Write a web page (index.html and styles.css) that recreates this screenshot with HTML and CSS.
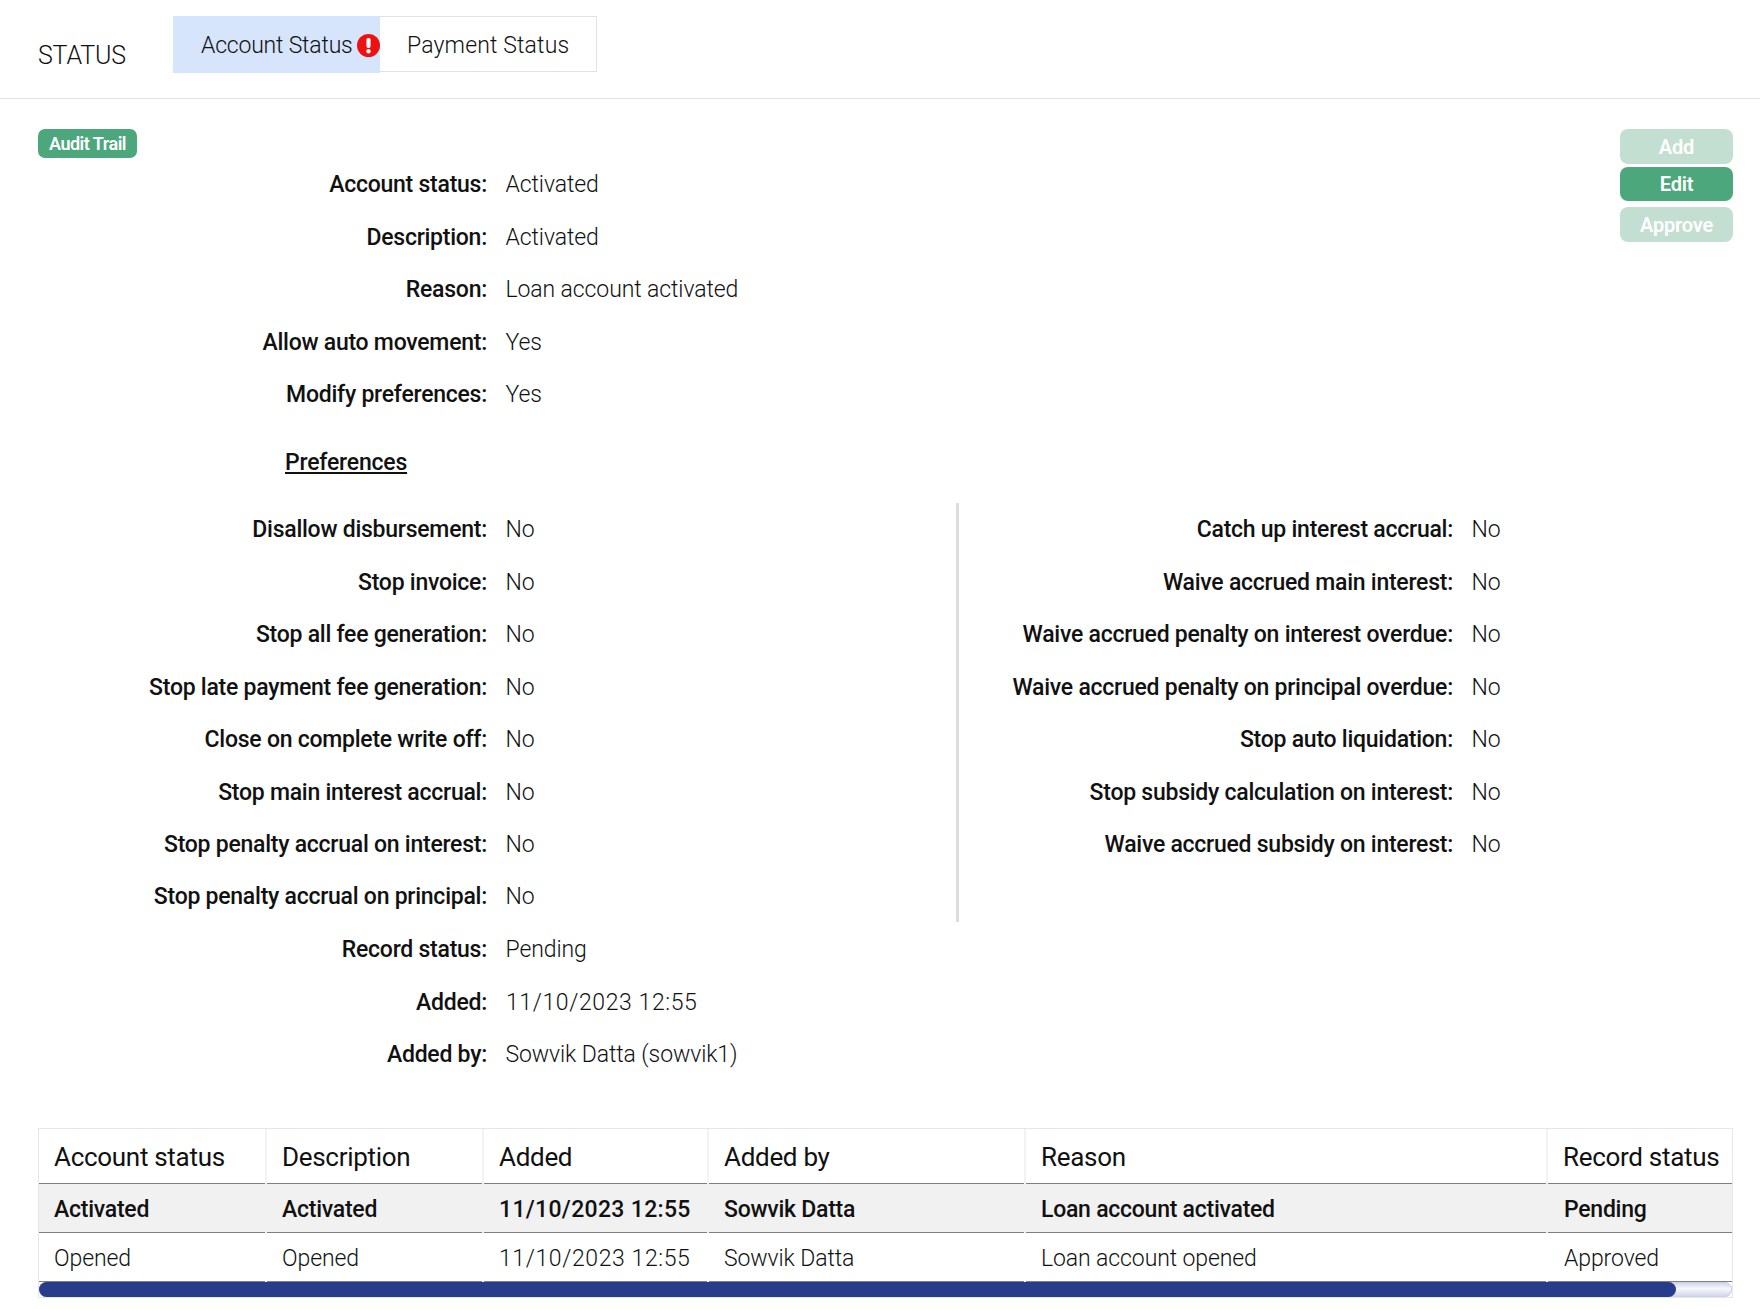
FILE: index.html
```html
<!DOCTYPE html>
<html lang="en">
<head>
<meta charset="utf-8">
<title>Status</title>
<link rel="stylesheet" href="styles.css">
</head>
<body>
<header class="topbar">
  <h1 class="title">STATUS</h1>
  <nav class="tabs">
    <a class="tab tab-active">Account Status<svg class="alert" viewBox="0 0 20 20" width="23" height="23"><circle cx="10" cy="10" r="10" fill="#ee1111"/><rect x="8.2" y="3.5" width="3.6" height="8.6" rx="1.6" fill="#fff"/><circle cx="10" cy="15" r="1.9" fill="#fff"/></svg></a>
    <a class="tab tab-plain">Payment Status</a>
  </nav>
</header>
<main class="content">
  <div class="actions">
    <button class="btn btn-off btn-add">Add</button>
    <button class="btn btn-edit">Edit</button>
    <button class="btn btn-off btn-approve">Approve</button>
  </div>
  <button class="audit">Audit Trail</button>
  <dl class="fields fields-top">
    <dt>Account status:</dt><dd>Activated</dd>
    <dt>Description:</dt><dd>Activated</dd>
    <dt>Reason:</dt><dd>Loan account activated</dd>
    <dt>Allow auto movement:</dt><dd>Yes</dd>
    <dt>Modify preferences:</dt><dd>Yes</dd>
  </dl>
  <h2 class="prefs-title">Preferences</h2>
  <div class="prefs">
    <dl class="fields prefs-left">
      <dt>Disallow disbursement:</dt><dd>No</dd>
      <dt>Stop invoice:</dt><dd>No</dd>
      <dt>Stop all fee generation:</dt><dd>No</dd>
      <dt>Stop late payment fee generation:</dt><dd>No</dd>
      <dt>Close on complete write off:</dt><dd>No</dd>
      <dt>Stop main interest accrual:</dt><dd>No</dd>
      <dt>Stop penalty accrual on interest:</dt><dd>No</dd>
      <dt>Stop penalty accrual on principal:</dt><dd>No</dd>
    </dl>
    <dl class="fields prefs-right">
      <dt>Catch up interest accrual:</dt><dd>No</dd>
      <dt>Waive accrued main interest:</dt><dd>No</dd>
      <dt>Waive accrued penalty on interest overdue:</dt><dd>No</dd>
      <dt>Waive accrued penalty on principal overdue:</dt><dd>No</dd>
      <dt>Stop auto liquidation:</dt><dd>No</dd>
      <dt>Stop subsidy calculation on interest:</dt><dd>No</dd>
      <dt>Waive accrued subsidy on interest:</dt><dd>No</dd>
    </dl>
  </div>
  <dl class="fields fields-bottom">
    <dt>Record status:</dt><dd>Pending</dd>
    <dt>Added:</dt><dd class="date">11/10/2023 12:55</dd>
    <dt>Added by:</dt><dd>Sowvik Datta (sowvik1)</dd>
  </dl>
  <div class="table-wrap">
    <table class="grid">
      <colgroup><col class="c1"><col class="c2"><col class="c3"><col class="c4"><col class="c5"><col class="c6"></colgroup>
      <thead><tr><th>Account status</th><th>Description</th><th>Added</th><th>Added by</th><th>Reason</th><th>Record status</th></tr></thead>
      <tbody>
        <tr class="selected"><td>Activated</td><td>Activated</td><td class="date">11/10/2023 12:55</td><td>Sowvik Datta</td><td>Loan account activated</td><td>Pending</td></tr>
        <tr><td>Opened</td><td>Opened</td><td class="date">11/10/2023 12:55</td><td>Sowvik Datta</td><td>Loan account opened</td><td>Approved</td></tr>
      </tbody>
    </table>
    <div class="scroll-track"><div class="scroll-thumb"></div></div>
  </div>
</main>
</body>
</html>
```
FILE: styles.css
```css
* { box-sizing: border-box; }
html, body { margin: 0; padding: 0; background: #fff; }
body {
  font-family: "Roboto", "Liberation Sans", sans-serif;
  font-size: 23px;
  font-weight: 300;
  letter-spacing: -0.1px;
  color: #111;
  height: 1309px;
  overflow: hidden;
}
.topbar {
  height: 99px;
  border-bottom: 1px solid #e2e2e2;
  padding: 16px 0 0 38px;
  display: flex;
  align-items: flex-start;
}
.title {
  margin: 24px 0 0 0;
  width: 135px;
  font-size: 25px;
  line-height: 32px;
  font-weight: 300;
  letter-spacing: -0.2px;
}
.tabs { display: flex; align-items: flex-start; }
.tab {
  display: flex;
  align-items: center;
  line-height: 30px;
  white-space: nowrap;
}
.tab-plain {
  height: 56px;
  width: 217px;
  padding: 4px 0 0 27px;
  border: 1px solid #e2e2e2;
  border-left: 0;
  letter-spacing: 0.15px;
}
.tab-active {
  height: 57px;
  width: 207px;
  padding: 2px 0 0 28px;
  background: #d6e4fc;
  letter-spacing: -0.2px;
}
.alert { margin-left: auto; flex: none; }
.content { position: relative; padding: 30px 27px 0 38px; }
.actions {
  position: absolute;
  top: 30px;
  right: 27px;
  width: 113px;
  display: flex;
  flex-direction: column;
}
.btn {
  height: 35px;
  border: 0;
  border-radius: 8px;
  background: #4ca87c;
  color: #fff;
  font: 600 20px/1 "Roboto", sans-serif;
  letter-spacing: -0.2px;
}
.btn-off { background: #c3dfd1; }
.btn-edit { margin-top: 3px; height: 34px; }
.btn-approve { margin-top: 6px; }
.audit {
  display: block;
  width: 99px;
  height: 29px;
  padding: 0;
  border: 0;
  border-radius: 7px;
  background: #4ca87c;
  color: #fff;
  font: 600 18px/1 "Roboto", sans-serif;
  letter-spacing: -0.5px;
}
.fields {
  margin: 0;
  display: grid;
  grid-template-columns: 449px 1fr;
  grid-auto-rows: 52.45px;
  align-items: center;
  line-height: 30px;
}
.fields dt {
  font-weight: 500;
  letter-spacing: -0.25px;
  text-align: right;
  white-space: nowrap;
}
.fields dd { margin: 0 0 0 18.5px; white-space: nowrap; }
.fields .date { letter-spacing: 0.6px; margin-left: 19px; }
.fields-top { margin-top: 1px; }
.fields-bottom { margin-top: 2px; }
.prefs-title {
  margin: 27px 0 0 247px;
  height: 55px;
  font-size: 23px;
  font-weight: 500;
  letter-spacing: -0.2px;
  line-height: 30px;
  text-decoration: underline;
}
.prefs { display: flex; height: 419px; }
.prefs-left {
  width: 921px;
  height: 419px;
  padding-top: 1px;
  border-right: 3px solid #ddd;
  align-content: start;
}
.prefs-right {
  flex: 1;
  padding-top: 1px;
  grid-template-columns: 494px 1fr;
  align-content: start;
}
.table-wrap {
  margin-top: 46px;
  width: 1695px;
  border: 1px solid #e6e6e6;
}
.grid {
  width: 100%;
  table-layout: fixed;
  border-collapse: collapse;
}
.c1 { width: 227px; }
.c2 { width: 217px; }
.c3 { width: 225px; }
.c4 { width: 317px; }
.c5 { width: 522px; }
.c6 { width: auto; }
.grid th {
  height: 55px;
  padding: 2px 0 0 15px;
  text-align: left;
  font-size: 26px;
  font-weight: 400;
  letter-spacing: -0.3px;
  border-bottom: 1px solid #808080;
  border-right: 2px solid #f2f2f2;
  white-space: nowrap;
}
.grid th:last-child { border-right: 0; }
.grid td {
  height: 49px;
  padding: 2px 0 0 15px;
  border-bottom: 1px solid #808080;
  border-right: 2px solid #fff;
  white-space: nowrap;
}
.grid td:last-child { border-right: 0; padding-left: 16px; }
.grid .date { letter-spacing: 0.6px; }
.grid .selected td {
  background: #f1f1f1;
  border-right-color: #f1f1f1;
  font-weight: 500;
  letter-spacing: -0.25px;
}
.grid .selected .date { letter-spacing: 0.32px; }
.scroll-track {
  height: 15px;
  border-radius: 8px;
  background: linear-gradient(#cdd2e6, #f7f8fc 45%, #cdd2e6);
  box-shadow: inset 0 0 0 1px #cdd2e6;
}
.scroll-thumb {
  width: 1637px;
  height: 15px;
  border-radius: 8px;
  background: #283c8c;
}
```
